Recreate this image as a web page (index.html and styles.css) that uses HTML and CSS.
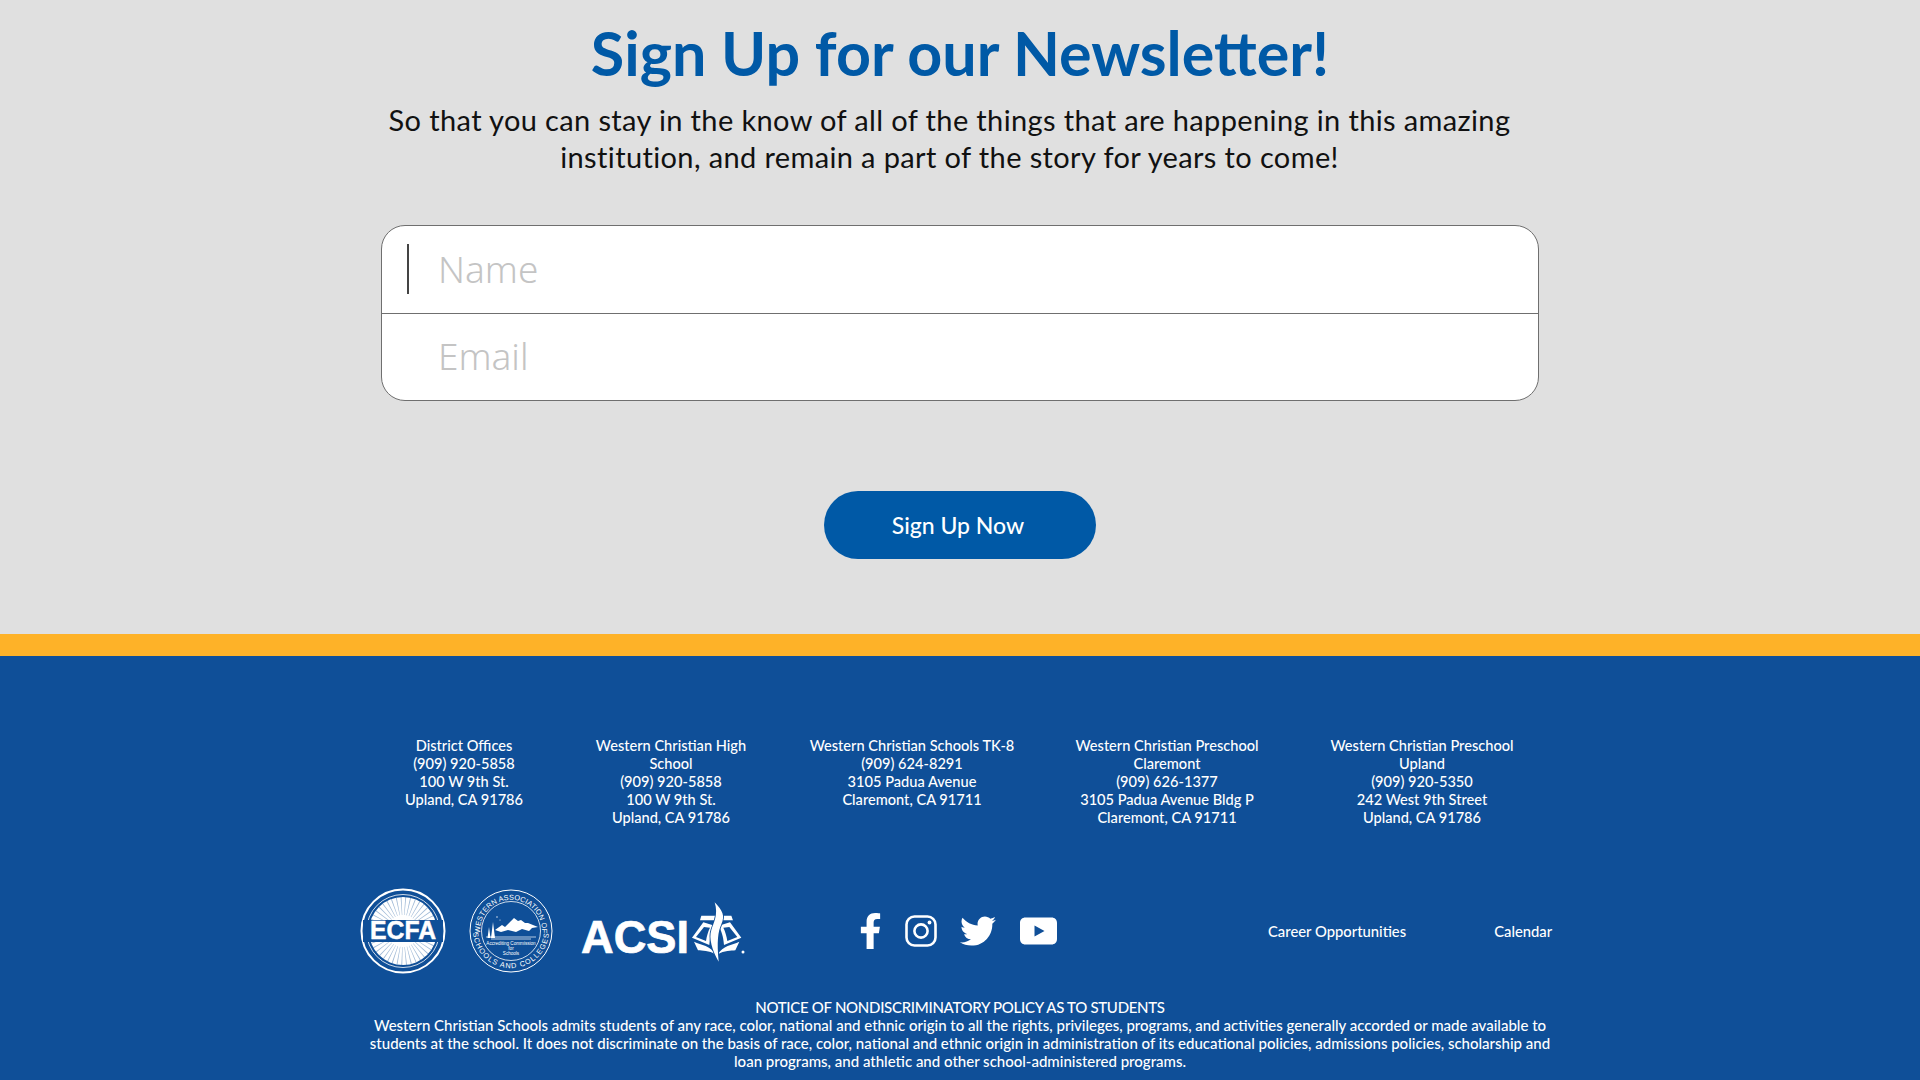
FILE: index.html
```html
<!DOCTYPE html>
<html lang="en">
<head>
    <meta charset="UTF-8">
    <title>Sign Up for our Newsletter</title>
    <link rel="stylesheet" href="styles.css">
</head>
<body>

<div class="page">
    <section class="signup">
        <h1>Sign Up for our Newsletter!</h1>
        <p class="intro">So that you can stay in the know of all of the things that are happening in this amazing<br>institution, and remain a part of the story for years to come!</p>
        <form class="fields">
            <div class="field">
                <span class="caret"></span>
                <input type="text" placeholder="Name">
            </div>
            <div class="field">
                <input type="email" placeholder="Email">
            </div>
        </form>
        <a class="btn" href="#">Sign Up Now</a>
    </section>

    <div class="stripe"></div>

    <footer class="footer">
        <div class="offices">
            <p>District Offices<br>(909) 920-5858<br>100 W 9th St.<br>Upland, CA 91786</p>
            <p>Western Christian High<br>School<br>(909) 920-5858<br>100 W 9th St.<br>Upland, CA 91786</p>
            <p>Western Christian Schools TK-8<br>(909) 624-8291<br>3105 Padua Avenue<br>Claremont, CA 91711</p>
            <p>Western Christian Preschool<br>Claremont<br>(909) 626-1377<br>3105 Padua Avenue Bldg P<br>Claremont, CA 91711</p>
            <p>Western Christian Preschool<br>Upland<br>(909) 920-5350<br>242 West 9th Street<br>Upland, CA 91786</p>
        </div>

        <div class="logos">
            <!-- ECFA seal -->
            <svg class="ecfa" viewBox="0 0 88 88" width="88" height="88">
                <circle cx="44" cy="44" r="41.500" fill="none" stroke="#fff" stroke-width="2"/>
                <circle cx="44" cy="44" r="36.500" fill="none" stroke="#fff" stroke-width="0.800"/>
                <circle cx="44" cy="44" r="34" fill="#fff"/>
                <circle cx="44" cy="44" r="25" fill="none" stroke="#0f4f98" stroke-width="18" stroke-dasharray="0.700 2.900" opacity="0.4"/>
                <rect x="4" y="33" width="80" height="22" fill="#0f4f98"/>
                <text class="ecfa-text" x="44" y="52" text-anchor="middle" textLength="66" lengthAdjust="spacingAndGlyphs">ECFA</text>
            </svg>

            <!-- WASC seal -->
            <svg class="wasc" viewBox="0 0 84 84" width="84" height="84">
                <defs>
                    <path id="wasc-top" d="M11.500 47.400A31 31 0 1 1 72.500 47.400"/>
                    <path id="wasc-bottom" d="M4.300 46A38 38 0 0 0 79.700 46"/>
                </defs>
                <circle cx="42" cy="42" r="41" fill="none" stroke="#fff" stroke-width="1"/>
                <circle cx="42" cy="42" r="29.500" fill="none" stroke="#fff" stroke-width="0.800"/>
                <text class="wasc-ring"><textPath href="#wasc-top" startOffset="50%" text-anchor="middle">WESTERN ASSOCIATION OF</textPath></text>
                <text class="wasc-ring wasc-wide"><textPath href="#wasc-bottom" startOffset="50%" text-anchor="middle">SCHOOLS AND COLLEGES</textPath></text>
                <path d="M26 41l7-5 3 2 6-6 3-3 4 3 3-1 4 3 3 0 10 4-6 1-3 3-7-2-6 3-8-2-7 2z" fill="#fff"/>
                <path d="M24 33l-2 16h4zM20 38l-1.500 11h3z" fill="#fff"/>
                <path d="M17 48h50M22 50h40" stroke="#fff" stroke-width="0.700"/>
                <circle cx="28" cy="28" r="0.700" fill="#fff"/>
                <circle cx="31" cy="31" r="0.500" fill="#fff"/>
                <text class="wasc-small" x="42" y="56" text-anchor="middle">Accrediting Commission</text>
                <text class="wasc-small" x="42" y="61" text-anchor="middle">for</text>
                <text class="wasc-small" x="42" y="66" text-anchor="middle">Schools</text>
            </svg>

            <!-- ACSI mark -->
            <svg class="acsi" viewBox="0 0 168 64" width="168" height="64">
                <text class="acsi-text" x="1" y="54" textLength="108" lengthAdjust="spacingAndGlyphs">ACSI</text>
                <g transform="translate(104,-4) scale(0.3333)" fill="#fff">
                    <path d="M52 62H142L147 76H48Z"/>
                    <path fill-rule="evenodd" d="M58 82L92 92C84 108 78 122 76 150L24 128ZM60 96L36 126L66 138C68 124 72 110 78 98Z"/>
                    <path fill-rule="evenodd" d="M138 82L104 92C112 108 118 122 120 150L172 128ZM136 96L160 126L130 138C128 124 124 110 118 98Z"/>
                    <path d="M30 140C52 150 80 152 94 178C76 166 54 168 42 166Z"/>
                    <path d="M166 140C144 150 116 152 102 178C120 166 142 168 154 166Z"/>
                    <path class="acsi-flame" d="M92 22C116 48 124 62 112 88C102 110 98 140 104 200C84 165 74 130 82 105C88 85 104 60 92 22Z"/>
                    <circle cx="177" cy="171" r="4.500"/>
                </g>
            </svg>

            <div class="social">
                <svg class="ic-fb" viewBox="0 0 320 512" width="23" height="36"><path fill="#fff" d="M279.14 288l14.22-92.66h-88.91v-60.13c0-25.35 12.42-50.06 52.24-50.06h40.42V6.26S260.43 0 225.36 0c-73.22 0-121.08 44.38-121.08 124.72v70.62H22.89V288h81.39v224h100.17V288z"/></svg>
                <svg class="ic-ig" viewBox="0 0 32 32" width="32" height="32">
                    <rect x="1.500" y="1.500" width="29" height="29" rx="8" fill="none" stroke="#fff" stroke-width="2.600"/>
                    <circle cx="16" cy="16" r="6.600" fill="none" stroke="#fff" stroke-width="2.600"/>
                    <circle cx="24.500" cy="7.500" r="1.900" fill="#fff"/>
                </svg>
                <svg class="ic-tw" viewBox="0 0 512 512" width="36" height="36"><path fill="#fff" d="M459.37 151.716c.325 4.548.325 9.097.325 13.645 0 138.72-105.583 298.558-298.558 298.558-59.452 0-114.68-17.219-161.137-47.106 8.447.974 16.568 1.299 25.34 1.299 49.055 0 94.213-16.568 130.274-44.832-46.132-.975-84.792-31.188-98.112-72.772 6.498.974 12.995 1.624 19.818 1.624 9.421 0 18.843-1.3 27.614-3.573-48.081-9.747-84.143-51.98-84.143-102.985v-1.299c13.969 7.797 30.214 12.67 47.431 13.319-28.264-18.843-46.781-51.005-46.781-87.391 0-19.492 5.197-37.36 14.294-52.954 51.655 63.675 129.3 105.258 216.365 109.807-1.624-7.797-2.599-15.918-2.599-24.04 0-57.828 46.782-104.934 104.934-104.934 30.213 0 57.502 12.67 76.67 33.137 23.715-4.548 46.456-13.32 66.599-25.34-7.798 24.366-24.366 44.833-46.132 57.827 21.117-2.273 41.584-8.122 60.426-16.243-14.292 20.791-32.161 39.308-52.628 54.253z"/></svg>
                <svg class="ic-yt" viewBox="0 0 38 28" width="39" height="28"><path fill="#fff" fill-rule="evenodd" d="M6 .5h26c3.300 0 5.500 2.200 5.500 5.500v16c0 3.300-2.200 5.500-5.500 5.500H6C2.700 27.500.5 25.300.5 22V6C.5 2.700 2.700.5 6 .5zM15 8.500v11l10-5.500z"/></svg>
            </div>

            <div class="links">
                <a href="#">Career Opportunities</a>
                <a href="#">Calendar</a>
            </div>
        </div>

        <p class="notice"><span class="notice-title">NOTICE OF NONDISCRIMINATORY POLICY AS TO STUDENTS</span><br>Western Christian Schools admits students of any race, color, national and ethnic origin to all the rights, privileges, programs, and activities generally accorded or made available to<br>students at the school. It does not discriminate on the basis of race, color, national and ethnic origin in administration of its educational policies, admissions policies, scholarship and<br>loan programs, and athletic and other school-administered programs.</p>
    </footer>
</div>

</body>
</html>
```

FILE: styles.css
```css
* {
    margin: 0;
    padding: 0;
    box-sizing: border-box;
}

body {
    font-family: "Lato", "Liberation Sans", sans-serif;
}

.page {
    width: 1920px;
    height: 1080px;
    overflow: hidden;
}

.signup {
    height: 634px;
    padding-top: 19px;
    background-color: #e0e0e0;
    display: flex;
    flex-direction: column;
    align-items: center;
}

h1 {
    font-size: 61px;
    line-height: 68px;
    font-weight: 700;
    color: #0059a6;
}

.intro {
    margin-top: 14px;
    padding-right: 21px;
    font-size: 29px;
    line-height: 37px;
    letter-spacing: 0.37px;
    color: #111;
    text-align: center;
}

.fields {
    width: 1158px;
    margin-top: 50px;
    background-color: #fff;
    border: 1px solid #6f6f6f;
    border-radius: 24px;
    overflow: hidden;
}

.field {
    height: 87px;
    display: flex;
    align-items: center;
    position: relative;
    padding-bottom: 3px;
}

.field + .field {
    border-top: 1px solid #6f6f6f;
}

.field input {
    width: 100%;
    height: 100%;
    padding-left: 56px;
    border: none;
    outline: none;
    background: transparent;
    font-family: "Noto Sans", sans-serif;
    font-size: 37px;
    font-weight: 300;
}

.field input::placeholder {
    color: #c4c4c4;
    opacity: 1;
}

.caret {
    position: absolute;
    left: 25px;
    top: 18px;
    width: 2px;
    height: 50px;
    background-color: #444;
}

.btn {
    display: block;
    width: 272px;
    height: 68px;
    margin-top: 90px;
    padding-right: 4px;
    border-radius: 34px;
    background-color: #0059a6;
    color: #fff;
    font-size: 23px;
    font-weight: 500;
    line-height: 68px;
    text-align: center;
    text-decoration: none;
}

.stripe {
    height: 22px;
    background-color: #feb228;
}

.footer {
    height: 424px;
    padding-top: 81px;
    background-color: #0f4f98;
    color: #fff;
    font-size: 15px;
    line-height: 18px;
    font-weight: 500;
}

.offices {
    width: 1192px;
    margin-left: 364px;
    display: grid;
    grid-template-columns: 200px 214px 268px 242px 268px;
    height: 90px;
    font-size: 14.600px;
    text-align: center;
}

.logos {
    margin-top: 60px;
    padding-left: 359px;
    height: 88px;
    display: flex;
    align-items: center;
}

.ecfa {
    flex: none;
}

.ecfa-text {
    font-family: "Liberation Sans", sans-serif;
    font-size: 26px;
    font-weight: 700;
    fill: #fff;
    stroke: #fff;
    stroke-width: 0.500px;
}

.wasc {
    flex: none;
    margin-left: 22px;
}

.wasc-ring {
    font-family: "Liberation Sans", sans-serif;
    font-size: 7.300px;
    letter-spacing: 0.100px;
    fill: #fff;
}

.wasc-wide {
    letter-spacing: 1px;
}

.wasc-small {
    font-family: "Liberation Sans", sans-serif;
    font-size: 4.600px;
    fill: #fff;
}

.acsi {
    flex: none;
    margin-left: 27px;
}

.acsi-text {
    font-family: "Liberation Sans", sans-serif;
    font-size: 46px;
    font-weight: 700;
    fill: #fff;
    stroke: #fff;
    stroke-width: 0.700px;
}

.acsi-flame {
    stroke: #0f4f98;
    stroke-width: 5px;
    paint-order: stroke;
}

.social {
    flex: none;
    margin-left: 111px;
    display: flex;
    align-items: center;
    gap: 23px;
}

.links {
    margin-left: 210px;
    display: flex;
    gap: 88px;
    font-size: 14.800px;
}

.links a {
    color: #fff;
    text-decoration: none;
}

.notice {
    margin-top: 23px;
    text-align: center;
}

.notice-title {
    letter-spacing: -0.300px;
}
```
